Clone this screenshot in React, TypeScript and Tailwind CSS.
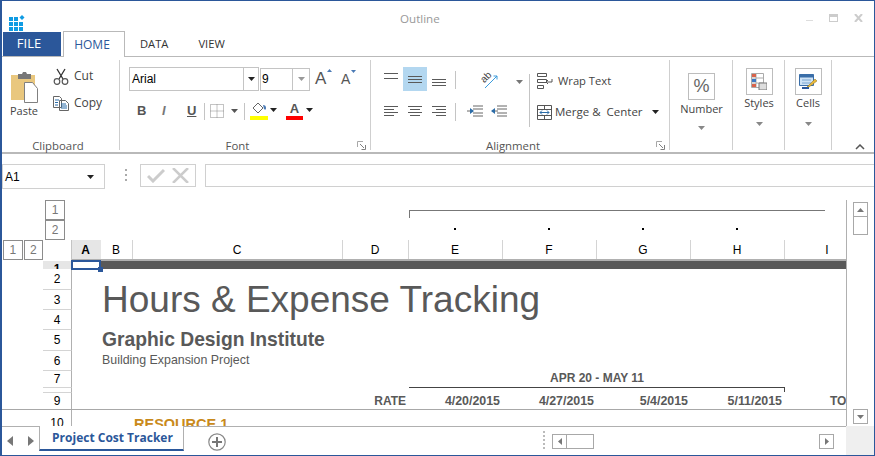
import type { ReactNode } from 'react';

const Caret = ({ className = '' }: { className?: string }) => (
  <svg width="7" height="4" viewBox="0 0 7 4" className={className}>
    <path d="M0 0h7L3.5 4z" fill="currentColor" />
  </svg>
);

const Sep = ({ className = '' }: { className?: string }) => <div className={`w-px bg-[#c4c4c4] ${className}`} />;

const Launcher = () => (
  <svg width="9" height="9" viewBox="0 0 9 9" className="absolute right-[4px] bottom-[0px]">
    <path d="M0.5 6V0.5H6" fill="none" stroke="#a8a8a8" />
    <path d="M3 3l4 4M8.5 4v4.5H4.5" fill="none" stroke="#808080" />
  </svg>
);

function Group({ label, width, launcher, offset, children }: { label?: string; width: string; launcher?: boolean; offset?: string; children: ReactNode }) {
  return (
    <div className={`relative flex h-[90px] flex-col border-r border-[#cfcfcf] ${width}`}>
      <div className="flex-1">{children}</div>
      {label && <div className={`mb-[-4px] text-center text-[11.4px] leading-[16px] text-[#555] ${offset ?? ''}`}>{label}</div>}
      {launcher && <Launcher />}
    </div>
  );
}

function Lines({ rows }: { rows: number[][] }) {
  return (
    <svg width="15" height="15" viewBox="0 0 15 15">
      {rows.map(([y, a, b], i) => (
        <path key={i} d={`M${a} ${y + 0.5}H${b}`} stroke="#5a5a5a" />
      ))}
    </svg>
  );
}

const IconBox = ({ children }: { children: ReactNode }) => (
  <div className="flex h-[27px] w-[27px] items-center justify-center border border-[#bdbdbd]">{children}</div>
);

function Ribbon() {
  return (
    <div className="flex h-[97px] border-b-2 border-[#b9b9b9] pt-[3px]">
      <Group label="Clipboard" width="w-[118px]" offset="pr-[5px]">
        <div className="flex pt-[5px]">
          <div className="ml-[6px] flex w-[32px] flex-col items-center">
            <svg width="29" height="31" viewBox="0 0 29 31" className="mt-[7px]">
              <path d="M1 3h24v25H1z" fill="#e9c77e" />
              <path d="M8 2h4l1-2h3l1 2h4v5H8z" fill="#777" />
              <path d="M14.500 10.500h8l5 6v14h-13z" fill="#fff" stroke="#808080" />
            </svg>
            <span className="text-[11px] leading-[16px] text-[#444]">Paste</span>
          </div>
          <div className="ml-[13px] flex flex-col">
            <div className="-mt-[1px] flex h-[24px] items-center gap-[5px]">
              <svg width="16" height="17" viewBox="0 0 16 17">
                <path d="M4 1l6 10M12 1L6 11" fill="none" stroke="#333" strokeWidth="1.300" />
                <circle cx="4" cy="13.500" r="2.800" fill="none" stroke="#555" strokeWidth="1.200" />
                <circle cx="12" cy="13.500" r="2.800" fill="none" stroke="#555" strokeWidth="1.200" />
              </svg>
              <span className="text-[12px] text-[#444]">Cut</span>
            </div>
            <div className="mt-[3px] flex h-[24px] items-center gap-[5px]">
              <svg width="16" height="15" viewBox="0 0 16 15">
                <path d="M0.500 0.500h6l2 2v9h-8zM6.500 4.500h6l3 3v7h-9z" fill="#fff" stroke="#666" />
                <path d="M2 4h4M2 6.500h3M2 9h3M8 8h5M8 10h6M8 12h6" stroke="#2b6ca8" />
              </svg>
              <span className="text-[12px] text-[#444]">Copy</span>
            </div>
          </div>
        </div>
      </Group>

      <Group label="Font" width="w-[251px]" launcher offset="pr-[15px]">
        <div className="pt-[7px] pl-[9px]">
          <div className="flex items-center">
            <div className="flex h-[24px] w-[130px] items-center border border-[#c4c4c4]">
              <span className="flex-1 pb-[1px] pl-[2px] font-['Liberation_Sans'] text-[12px] leading-[16px] text-black">Arial</span>
              <div className="flex h-full w-[15px] items-center justify-center border-l border-[#c4c4c4] text-[#222]">
                <Caret />
              </div>
            </div>
            <div className="ml-px flex h-[23px] w-[50px] items-center border border-[#c4c4c4]">
              <span className="flex-1 pl-[1px] font-['Liberation_Sans'] text-[12px] text-black">9</span>
              <div className="flex h-full w-[17px] items-center justify-center border-l border-[#c4c4c4] text-[#999]">
                <Caret />
              </div>
            </div>
            <div className="relative ml-[5px] w-[14px] font-['Liberation_Sans'] text-[17px] leading-[18px] text-[#555]">
              A
              <svg width="5" height="3" className="absolute top-[-1px] right-[-3px]"><path d="M0 3h5L2.500 0z" fill="#4a7ab5" /></svg>
            </div>
            <div className="relative ml-[12px] w-[12px] font-['Liberation_Sans'] text-[14px] leading-[16px] text-[#555]">
              A
              <svg width="5" height="3" className="absolute top-[-1px] right-[-3px]"><path d="M0 0h5L2.500 3z" fill="#4a7ab5" /></svg>
            </div>
          </div>
          <div className="mt-[8px] flex h-[24px] items-center text-[#444]">
            <span className="ml-[8px] w-[25px] font-['Liberation_Sans'] text-[13px] font-bold text-[#555]">B</span>
            <span className="w-[25px] font-['Liberation_Sans'] text-[13px] font-bold italic text-[#777]">I</span>
            <span className="w-[16px] font-['Liberation_Sans'] text-[13px] font-bold text-[#555] underline">U</span>
            <Sep className="ml-[1px] h-[17px]" />
            <svg width="14" height="14" viewBox="0 0 14 14" className="ml-[5px]">
              <path d="M.5.500h13v13H.5zM7 .5v13M.5 7h13" fill="none" stroke="#888" strokeDasharray="1 1" />
            </svg>
            <Caret className="ml-[7px] text-[#555]" />
            <Sep className="ml-[6px] h-[17px]" />
            <div className="ml-[5px] flex w-[18px] flex-col">
              <svg width="18" height="13" viewBox="0 0 18 13">
                <path d="M8 1l5 5-5 5-5-5z" fill="#fff" stroke="#666" />
                <path d="M13 3c2 0 3 1 3 3s-1 2-2 1z" fill="#4a7ab5" />
              </svg>
              <div className="mt-[1px] h-[4px] bg-[#ffff00]" />
            </div>
            <Caret className="ml-[2px] mb-[3px] text-[#222]" />
            <div className="ml-[9px] flex w-[17px] flex-col items-center">
              <span className="font-['Liberation_Sans'] text-[13px] leading-[14px] font-bold text-[#555]">A</span>
              <div className="h-[4px] w-full bg-[#ff0000]" />
            </div>
            <Caret className="ml-[3px] mb-[3px] text-[#222]" />
          </div>
        </div>
      </Group>

      <Group label="Alignment" width="w-[299px]" launcher offset="pr-[14px]">
        <div className="flex pt-[7px] pl-[8px]">
          <div className="grid w-[72px] grid-cols-[24px_24px_24px] grid-rows-[24px_24px] gap-y-[8px]">
            <div className="flex items-center justify-center"><Lines rows={[[1, 0, 14], [6, 0, 14]]} /></div>
            <div className="flex items-center justify-center bg-[#b3d7f0]"><Lines rows={[[4, 0, 14], [7, 0, 14], [10, 0, 14]]} /></div>
            <div className="flex items-center justify-center"><Lines rows={[[7, 0, 14], [10, 0, 14], [13, 0, 14]]} /></div>
            <div className="flex items-center justify-center"><Lines rows={[[2, 0, 14], [5, 0, 10], [8, 0, 14], [11, 0, 10]]} /></div>
            <div className="flex items-center justify-center"><Lines rows={[[2, 0, 14], [5, 2, 12], [8, 0, 14], [11, 2, 12]]} /></div>
            <div className="flex items-center justify-center"><Lines rows={[[2, 0, 14], [5, 4, 14], [8, 0, 14], [11, 4, 14]]} /></div>
          </div>
          <div className="ml-[4px] flex flex-col items-start">
            <Sep className="mt-[4px] h-[18px]" />
            <Sep className="mt-[14px] h-[18px]" />
          </div>
          <div className="flex w-[73px] flex-col">
            <div className="flex h-[24px] items-center">
              <svg width="18" height="18" viewBox="0 0 18 18" className="mt-[1px] ml-[24px] overflow-visible">
                <text x="0" y="10" fontSize="10" fontFamily="Liberation Sans" fill="#444" transform="rotate(-45 5 6)">ab</text>
                <path d="M5 17L17 5M13.500 5H17v3.500" fill="none" stroke="#3a9bdc" />
              </svg>
              <Caret className="mt-[6px] ml-[18px] text-[#777]" />
            </div>
            <div className="mt-[8px] flex h-[24px] items-center gap-[8px] pl-[11px]">
              <svg width="16" height="12" viewBox="0 0 16 12">
                <path d="M6 1h10M6 4h10M6 8h10M6 11h10M0 6h6" stroke="#666" />
                <path d="M3 3l4 3-4 3z" fill="#2b6ca8" />
              </svg>
              <svg width="16" height="12" viewBox="0 0 16 12">
                <path d="M6 1h10M6 4h10M6 8h10M6 11h10M1 6h6" stroke="#666" />
                <path d="M4 3L0 6l4 3z" fill="#2b6ca8" />
              </svg>
            </div>
          </div>
          <Sep className="mt-[7px] h-[53px]" />
          <div className="flex flex-col pl-[7px]">
            <div className="mt-[2px] flex h-[24px] items-center gap-[5px]">
              <svg width="16" height="16" viewBox="0 0 16 16">
                <path d="M.5.500h9v3h-9zM.5 6.500h9v3h-9zM.5 12.500h6v3h-6z" fill="none" stroke="#555" />
                <path d="M15 6v3h-6M11 7l-2 2 2 2" fill="none" stroke="#555" />
              </svg>
              <span className="text-[11.2px] text-[#444]">Wrap Text</span>
            </div>
            <div className="mt-[7px] flex h-[24px] items-center gap-[3px]">
              <svg width="15" height="15" viewBox="0 0 15 15">
                <path d="M.5.500h14v14H.5zM.5 4.500h14M.5 10.500h14M7.500.5v4M7.500 10.500v4" fill="none" stroke="#555" />
                <path d="M3 7.500h9" stroke="#2b6ca8" />
                <path d="M5 5.500l-2 2 2 2M10 5.500l2 2-2 2" fill="none" stroke="#2b6ca8" />
              </svg>
              <span className="whitespace-pre text-[11.5px] text-[#444]">Merge &amp;  Center</span>
              <Caret className="ml-[6px] text-[#222]" />
            </div>
          </div>
        </div>
      </Group>

      <Group width="w-[63px]">
        <div className="flex flex-col items-center pt-[13px] pl-px">
          <IconBox><span className="font-['Liberation_Sans'] text-[18px] text-[#666]">%</span></IconBox>
          <span className="mt-[1px] text-[11px] leading-[16px] text-[#444]">Number</span>
          <Caret className="mt-[9px] text-[#888]" />
        </div>
      </Group>
      <Group width="w-[52px]">
        <div className="flex flex-col items-center pt-[8px] pl-px">
          <IconBox>
            <svg width="16" height="17" viewBox="0 0 16 17">
              <path d="M.5.500h12v14H.5zM.5 5h12M.5 10h12M5 .5v14" fill="#fff" stroke="#aaa" />
              <path d="M1 6h4v3H1z" fill="#3c78c4" />
              <path d="M1 1h4v3H1zM1 11h4v3H1z" fill="#d9634b" />
              <path d="M8 10h8v7H8z" fill="#ddd" stroke="#777" />
            </svg>
          </IconBox>
          <span className="text-[11px] leading-[16px] text-[#444]">Styles</span>
          <Caret className="mt-[11px] text-[#888]" />
        </div>
      </Group>
      <Group width="w-[47px]">
        <div className="flex flex-col items-center pt-[8px]">
          <IconBox>
            <svg width="19" height="17" viewBox="0 0 19 17">
              <path d="M.5 1.500h14v11H.5z" fill="#cfe3f5" stroke="#3a6ea8" />
              <path d="M.5 1.500h14v3H.5z" fill="#3a6ea8" />
              <path d="M3 7h9M3 10h9" stroke="#7aa5d0" />
              <path d="M8 14l8-8 2 2-8 6z" fill="#e8b93a" stroke="#8a6d1d" strokeWidth=".5" />
              <path d="M3 15h7" stroke="#2b579a" strokeWidth="2" />
            </svg>
          </IconBox>
          <span className="text-[11px] leading-[16px] text-[#444]">Cells</span>
          <Caret className="mt-[11px] text-[#888]" />
        </div>
      </Group>
      <div className="flex flex-1 items-end justify-end pr-[9px]">
        <svg width="10" height="6" viewBox="0 0 10 6" className="mb-[2px]">
          <path d="M1 5l4-4 4 4" fill="none" stroke="#555" strokeWidth="1.500" />
        </svg>
      </div>
    </div>
  );
}

const cols = ['A', 'B', 'C', 'D', 'E', 'F', 'G', 'H', 'I'];
const rowNums: [string, string][] = [
  ['2', 'row-start-5'],
  ['3', 'row-start-6'],
  ['4', 'row-start-7'],
  ['5', 'row-start-8'],
  ['6', 'row-start-9'],
  ['7', 'row-start-10'],
  ['8', 'row-start-11'],
  ['9', 'row-start-12'],
];

function OutlineBtn({ n, className = '' }: { n: string; className?: string }) {
  return (
    <div className={`flex h-[20px] w-[20px] items-center justify-center border border-[#8c8c8c] font-['Liberation_Sans'] text-[12px] text-[#777] ${className}`}>
      {n}
    </div>
  );
}

const boldCell = "font-['Liberation_Sans'] font-bold text-[#595959] text-right pr-[3px] self-end leading-[17px] whitespace-nowrap";

function Sheet() {
  return (
    <div className="grid flex-1 grid-cols-[41px_29px_29px_32px_210px_66px_94px_94px_94px_94px_61px] grid-rows-[20px_20px_21px_8px_21px_20px_20px_21px_20px_17px_5px_17px_16px] overflow-hidden font-['Liberation_Sans'] text-[#595959]">
      <OutlineBtn n="1" className="col-start-2 row-start-1 ml-[2px]" />
      <OutlineBtn n="2" className="col-start-2 row-start-2 ml-[2px]" />
      <div className="col-start-1 row-start-3 flex gap-px pl-px">
        <OutlineBtn n="1" />
        <OutlineBtn n="2" />
      </div>

      <div className="col-start-7 row-start-1 mt-[10px] h-[8px] w-[416px] border-t border-l border-[#777]" />
      {[7, 8, 9, 10].map((c) => (
        <div
          key={c}
          className={`row-start-2 mt-[8px] mr-[2px] h-[2px] w-[2px] justify-self-center bg-black ${c === 7 ? 'col-start-7' : c === 8 ? 'col-start-8' : c === 9 ? 'col-start-9' : 'col-start-10'}`}
        />
      ))}

      <div className="col-start-2 row-start-3 border-r border-[#c4c4c4]" />
      {cols.map((c, i) => (
        <div
          key={c}
          style={{ gridColumnStart: i + 3 }}
          className={`row-start-3 flex items-center justify-center border-b-2 border-[#b0b0b0] text-[12px] text-black ${c === 'A' ? 'bg-[#e6e6e6] pr-[2px] font-bold' : c === 'I' ? 'pl-[23px]' : 'pr-[2px] shadow-[inset_-1px_0_0_#d4d4d4]'}`}
        >
          {c}
        </div>
      ))}

      <div className="col-start-2 row-start-4 overflow-hidden border-r border-[#b0b0b0] bg-[#e6e6e6] text-center text-[12px] leading-[16px] font-bold text-black">1</div>
      <div className="col-start-3 col-end-12 row-start-4 bg-[#595959]" />
      <div className="relative z-10 col-start-3 row-start-4 -mt-[1px] ml-[-1px] h-[10px] border-2 border-[#2b579a] bg-white">
        <div className="absolute right-[-4px] bottom-[-4px] h-[5px] w-[5px] bg-[#2b579a]" />
      </div>

      {rowNums.map(([n, r]) => (
        <div key={n} className={`col-start-2 ${r} flex items-center justify-center overflow-hidden border-r border-b border-r-[#b0b0b0] border-b-[#d4d4d4] text-[12px] text-black`}>
          {n === '8' ? '' : n}
        </div>
      ))}
      <div className="col-start-2 row-start-13 overflow-hidden border-r border-[#b0b0b0] text-center text-[12px] leading-[26px] text-black">10</div>

      <div className="col-start-4 row-start-5 row-end-8 self-center pl-px text-[37px] leading-[40px] whitespace-nowrap text-[#595959]">Hours &amp; Expense Tracking</div>
      <div className="col-start-4 row-start-8 self-center pb-[2px] pl-px text-[19.3px] leading-[21px] font-bold whitespace-nowrap text-[#595959]">Graphic Design Institute</div>
      <div className="col-start-4 row-start-9 self-center pb-[2px] pl-px text-[12.4px] leading-[16px] whitespace-nowrap text-[#595959]">Building Expansion Project</div>

      <div className="col-start-7 col-end-11 row-start-10 border-b border-[#444] pb-[1px] text-center text-[12px] leading-[15px] font-bold text-[#595959]">APR 20 - MAY 11</div>
      <div className="col-start-10 row-start-11 row-end-12 h-[4px] justify-self-end border-r border-[#444]" />

      <div className={`col-start-6 row-start-12 text-[12px] ${boldCell}`}>RATE</div>
      <div className={`col-start-7 row-start-12 text-[12.4px] ${boldCell}`}>4/20/2015</div>
      <div className={`col-start-8 row-start-12 text-[12.4px] ${boldCell}`}>4/27/2015</div>
      <div className={`col-start-9 row-start-12 text-[12.4px] ${boldCell}`}>5/4/2015</div>
      <div className={`col-start-10 row-start-12 text-[12.4px] ${boldCell}`}>5/11/2015</div>
      <div className="col-start-11 row-start-12 self-end overflow-hidden pl-[45px] text-[12px] leading-[17px] font-bold whitespace-nowrap text-[#595959]">TOTAL</div>
      <div className="col-start-1 col-end-12 row-start-12 self-end border-b border-[#a8a8a8]" />

      <div className="col-start-5 row-start-13 mt-[6px] overflow-hidden pl-[1px] text-[14.5px] leading-[16px] font-bold whitespace-nowrap text-[#c98a1b]">RESOURCE 1</div>
    </div>
  );
}

function SmallBtn({ children, className = '' }: { children: ReactNode; className?: string }) {
  return <div className={`flex h-[15px] w-[15px] items-center justify-center border border-[#a8a8a8] text-[#777] ${className}`}>{children}</div>;
}

export default function App() {
  return (
    <div className="flex h-[456px] w-[875px] flex-col overflow-hidden border-t border-r border-b border-l-2 border-[#2b579a] bg-white font-['Open_Sans',sans-serif]">
      {/* title bar */}
      <div className="flex h-[31px] shrink-0 items-start">
        <svg width="16" height="16" viewBox="0 0 16 16" className="mt-[14px] ml-[7px]">
          <path d="M0 2h4v4H0zM5 2h4v4H5zM0 7h4v4H0zM5 7h4v4H5zM10 7h4v4h-4zM0 12h4v4H0zM5 12h4v4H5zM10 12h4v4h-4z" fill="#0f9be3" />
          <path d="M13 0l2.500 2.500L13 5l-2.500-2.500z" fill="#0f9be3" />
        </svg>
        <span className="mt-[9px] ml-[375px] text-[11.6px] leading-[18px] text-[#999]">Outline</span>
        <div className="mt-[13px] ml-auto flex items-start gap-[16px] pr-[11px]">
          <div className="mt-[6px] h-px w-[7px] bg-[#ddd]" />
          <div className="h-[8px] w-[9px] border border-t-[3px] border-[#ccc]" />
          <svg width="9" height="8" viewBox="0 0 9 8">
            <path d="M1 0l7 8M8 0L1 8" stroke="#ccc" strokeWidth="2" />
          </svg>
        </div>
      </div>

      {/* tabs */}
      <div className="flex h-[25px] shrink-0 items-start border-b border-[#b9b9b9] text-[11.2px]">
        <div className="ml-px flex h-[24px] w-[58px] items-center justify-center bg-[#2b579a] pr-[6px] text-[13px] text-white">FILE</div>
        <div className="z-10 -mt-px ml-[2px] flex h-[26px] w-[62px] items-center justify-center border-x border-t border-[#b9b9b9] bg-white pr-[4px] text-[12px] text-[#2b579a]">HOME</div>
        <span className="ml-[15px] leading-[24px] text-[#333]">DATA</span>
        <span className="ml-[30px] leading-[24px] text-[#333]">VIEW</span>
      </div>

      <Ribbon />

      {/* formula bar */}
      <div className="flex h-[46px] shrink-0 items-start pt-[10px]">
        <div className="flex h-[25px] w-[103px] items-center border border-[#d0d0d0] pl-[2px] font-['Liberation_Sans'] text-[12px] text-black">
          A1
          <Caret className="mr-[10px] ml-auto text-[#222]" />
        </div>
        <div className="mt-[5px] ml-[20px] flex flex-col gap-[3px]">
          <div className="h-[2px] w-[2px] bg-[#aaa]" />
          <div className="h-[2px] w-[2px] bg-[#aaa]" />
          <div className="h-[2px] w-[2px] bg-[#aaa]" />
        </div>
        <div className="ml-[13px] flex h-[23px] w-[56px] items-center justify-around border border-[#d0d0d0] px-[2px]">
          <svg width="18" height="15" viewBox="0 0 18 15"><path d="M1 8l5 5L17 2" fill="none" stroke="#ccc" strokeWidth="3" /></svg>
          <svg width="17" height="15" viewBox="0 0 17 15"><path d="M1 0l15 15M16 0L1 15" fill="none" stroke="#ccc" strokeWidth="2.500" /></svg>
        </div>
        <div className="ml-[9px] h-[23px] flex-1 border-y border-l border-[#d0d0d0]" />
      </div>

      {/* sheet */}
      <div className="flex h-[226px] shrink-0">
        <Sheet />
        <div className="flex w-[28px] flex-col items-center border-l border-[#b0b0b0] pt-[2px] pb-[2px]">
          <SmallBtn>
            <svg width="7" height="4" viewBox="0 0 7 4"><path d="M0 4h7L3.500 0z" fill="currentColor" /></svg>
          </SmallBtn>
          <div className="-mt-px h-[19px] w-[15px] border border-[#a8a8a8]" />
          <SmallBtn className="mt-auto h-[14px]"><Caret /></SmallBtn>
        </div>
      </div>

      {/* sheet tabs */}
      <div className="flex min-h-0 flex-1">
        <div className="flex flex-1 items-start border-t border-[#b0b0b0]">
          <svg width="6" height="10" viewBox="0 0 6 10" className="mt-[9px] ml-[5px]"><path d="M6 0v10L0 5z" fill="#777" /></svg>
          <svg width="6" height="10" viewBox="0 0 6 10" className="mt-[9px] ml-[15px]"><path d="M0 0v10l6-5z" fill="#777" /></svg>
          <div className="-mt-px ml-[5px] flex h-[25px] w-[145px] items-center justify-center border-x border-b-2 border-x-[#b0b0b0] border-b-[#2b579a] bg-white pl-[2px] text-[12px] font-bold text-[#2b579a]">Project Cost Tracker</div>
          <svg width="18" height="18" viewBox="0 0 18 18" className="mt-[6px] ml-[24px]">
            <circle cx="9" cy="9" r="8.200" fill="none" stroke="#888" strokeWidth="1.200" />
            <path d="M9 4v10M4 9h10" stroke="#777" strokeWidth="2" />
          </svg>
          <div className="mt-[4px] ml-[317px] flex flex-col gap-[2px]">
            {[0, 1, 2, 3, 4].map((i) => <div key={i} className="h-[2px] w-[2px] bg-[#bbb]" />)}
          </div>
          <div className="mt-[7px] ml-[7px] flex">
            <SmallBtn><svg width="4" height="7" viewBox="0 0 4 7"><path d="M4 0v7L0 3.500z" fill="currentColor" /></svg></SmallBtn>
            <div className="-ml-px h-[15px] w-[28px] border border-[#a8a8a8]" />
            <SmallBtn className="ml-[225px]"><svg width="4" height="7" viewBox="0 0 4 7"><path d="M0 0v7l4-3.500z" fill="currentColor" /></svg></SmallBtn>
          </div>
        </div>
        <div className="w-[28px] bg-[#efefef]" />
      </div>
    </div>
  );
}
